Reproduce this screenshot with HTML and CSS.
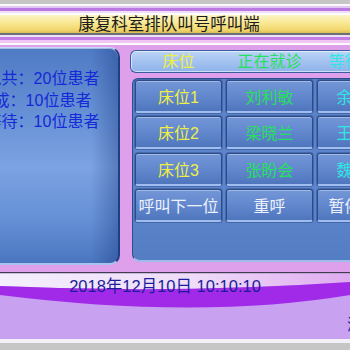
FILE: index.html
```html
<!DOCTYPE html>
<html lang="zh">
<head>
<meta charset="utf-8">
<title>康复科室排队叫号呼叫端</title>
<link rel="stylesheet" href="styles.css">
</head>
<body>
<div class="screen">
  <div class="top-gray"></div>
  <div class="stripe stripe-top"></div>
  <div class="title">康复科室排队叫号呼叫端</div>
  <div class="stripe stripe-mid"></div>
  <div class="main">
    <div class="stats">
      <div class="stat">今日总共：20位患者</div>
      <div class="stat">已完成：10位患者</div>
      <div class="stat">正在等待：10位患者</div>
    </div>
    <div class="board">
      <div class="head">
        <span class="c-yellow">床位</span>
        <span class="c-green">正在就诊</span>
        <span class="c-cyan">等待就诊</span>
      </div>
      <div class="grid">
        <div class="btn c-yellow">床位1</div>
        <div class="btn c-green">刘利敏</div>
        <div class="btn c-cyan">余晓丽</div>
        <div class="btn c-yellow">床位2</div>
        <div class="btn c-green">梁晓兰</div>
        <div class="btn c-cyan">王小红</div>
        <div class="btn c-yellow">床位3</div>
        <div class="btn c-green">张盼会</div>
        <div class="btn c-cyan">魏明明</div>
        <div class="btn c-white">呼叫下一位</div>
        <div class="btn c-white">重呼</div>
        <div class="btn c-white">暂停呼叫</div>
      </div>
    </div>
  </div>
  <div class="footer">
    <svg class="footer-bg" width="350" height="78" viewBox="0 0 350 78">
      <defs>
        <linearGradient id="upper" x1="0" y1="0" x2="1" y2="0">
          <stop offset="0" stop-color="#f3effc"/>
          <stop offset="0.55" stop-color="#eedcf8"/>
          <stop offset="1" stop-color="#dfaaf0"/>
        </linearGradient>
      </defs>
      <rect x="0" y="0" width="350" height="1.5" fill="#3e3e4e"/>
      <rect x="0" y="1.5" width="350" height="66" fill="#c8a1f1"/>
      <path d="M0,1.5 L350,1.5 L350,10 Q175,22 0,14 Z" fill="url(#upper)"/>
      <path d="M0,14 Q175,22 350,10 L350,23 Q200,48 0,23 Z" fill="#a12ae8"/>
      <rect x="0" y="67" width="350" height="4" fill="#f4f0f8"/>
      <rect x="0" y="71" width="350" height="7" fill="#c6c6c6"/>
    </svg>
    <div class="date">2018年12月10日 10:10:10</div>
    <div class="marquee">滚动信息</div>
  </div>
</div>
</body>
</html>
```

FILE: styles.css
```css
* { box-sizing: border-box; }

html, body {
  margin: 0;
  padding: 0;
}

body {
  width: 350px;
  height: 350px;
  overflow: hidden;
  font-family: "Liberation Sans", "Noto Sans CJK SC", sans-serif;
  font-size: 16px;
}

.screen {
  width: 350px;
  height: 350px;
  overflow: hidden;
  background: #dea0ea;
}

.top-gray {
  height: 4px;
  background: #c6c6c6;
}

.stripe-top {
  height: 11px;
  background: linear-gradient(to bottom,
    #fbf8fd 0, #fbf8fd 2px,
    #e2c6f2 2px, #e2c6f2 4px,
    #bb78e2 4px, #bb78e2 7px,
    #f0dff8 7px, #f0dff8 9px,
    #fdfbfe 9px);
}

.title {
  height: 20px;
  line-height: 18px;
  text-align: center;
  font-size: 16.5px;
  color: #1c1c1c;
  padding-right: 12px;
  white-space: nowrap;
  background: linear-gradient(to bottom, #fcf4c6 0, #f9e893 40%, #f1d66c 75%, #dcbd55 90%, #68707a 90%, #68707a 100%);
}

.stripe-mid {
  height: 12px;
  background: linear-gradient(to bottom,
    #eee0f6 0, #eee0f6 2px,
    #c47ee4 2px, #c47ee4 5px,
    #f2c6f2 5px, #f2c6f2 8px,
    #fdfafe 8px, #fdfafe 10px,
    #dea0ea 10px);
}

.main {
  display: flex;
  align-items: flex-start;
  height: 218px;
}

.stats {
  flex: 0 0 186px;
  margin-left: -66px;
  height: 218px;
  padding-top: 20px;
  border: 1px solid #244c92;
  border-top-color: #c8daf6;
  border-right: 2px solid #1e3f84;
  border-bottom: 2px solid #a8c4ee;
  border-radius: 0 10px 10px 0;
  background:
    linear-gradient(to right, rgba(20, 50, 120, 0) 85%, rgba(20, 50, 120, 0.35) 100%),
    linear-gradient(to bottom, #4f7bc5 0, #6a94d8 35%, #7ca3e2 55%, #6590d6 80%, #4a76c0 100%);
  box-shadow: inset 0 1px 0 rgba(255, 255, 255, 0.5);
}

.stat {
  text-align: center;
  line-height: 21.5px;
  color: #1529d6;
  white-space: nowrap;
}

.board {
  flex: 0 0 240px;
  margin-left: 10px;
}

.head {
  margin-top: 3px;
  height: 23px;
  width: 240px;
  padding-left: 4px;
  display: grid;
  grid-template-columns: 87px 87px 87px;
  column-gap: 4px;
  align-items: center;
  text-align: center;
  line-height: 21px;
  white-space: nowrap;
  border: 1px solid #3b5c9e;
  border-right: none;
  border-radius: 6px 0 0 6px;
  background: linear-gradient(to bottom, #bcd4f6 0, #a4c2f0 50%, #8eb2ea 100%);
  box-shadow: inset 0 0 0 1px rgba(255, 255, 255, 0.55);
}

.grid {
  margin-top: 5px;
  margin-left: 2px;
  width: 240px;
  height: 184px;
  padding: 1px 0 0 2px;
  display: grid;
  grid-template-columns: 87px 87px 87px;
  grid-auto-rows: 33px;
  column-gap: 4px;
  row-gap: 3.33px;
  border: 1px solid #2c4d8e;
  border-right: none;
  border-bottom: 2px solid #9dbcec;
  border-radius: 6px 0 0 8px;
  background: linear-gradient(to bottom, #5a81c8 0, #5e86cc 60%, #557dc4 100%);
}

.btn {
  display: flex;
  align-items: center;
  justify-content: center;
  white-space: nowrap;
  border: 1px solid #2b4b8c;
  border-bottom: 2px solid #9fbeef;
  border-radius: 3px;
  background: linear-gradient(to bottom, #7396d6 0, #6489cf 45%, #4f76bd 100%);
  box-shadow: inset 0 1px 0 rgba(255, 255, 255, 0.35), 0 0 0 1px rgba(30, 55, 110, 0.35);
}

.c-yellow { color: #eef044; }
.c-green { color: #25e05e; }
.c-cyan { color: #2fe6e2; }
.c-white { color: #edf2fc; }

.footer {
  margin-top: 7px;
  height: 78px;
  display: grid;
  grid-template-columns: 350px;
  grid-template-rows: 78px;
}

.footer-bg {
  grid-area: 1 / 1;
  display: block;
}

.date {
  grid-area: 1 / 1;
  justify-self: center;
  align-self: start;
  margin-right: 20px;
  margin-top: 4px;
  line-height: 20px;
  font-size: 16.5px;
  color: #1c1c9c;
  white-space: nowrap;
}

.marquee {
  grid-area: 1 / 1;
  justify-self: start;
  align-self: start;
  margin-left: 347px;
  margin-top: 43px;
  line-height: 20px;
  color: #1c1c9c;
  white-space: nowrap;
}
```
